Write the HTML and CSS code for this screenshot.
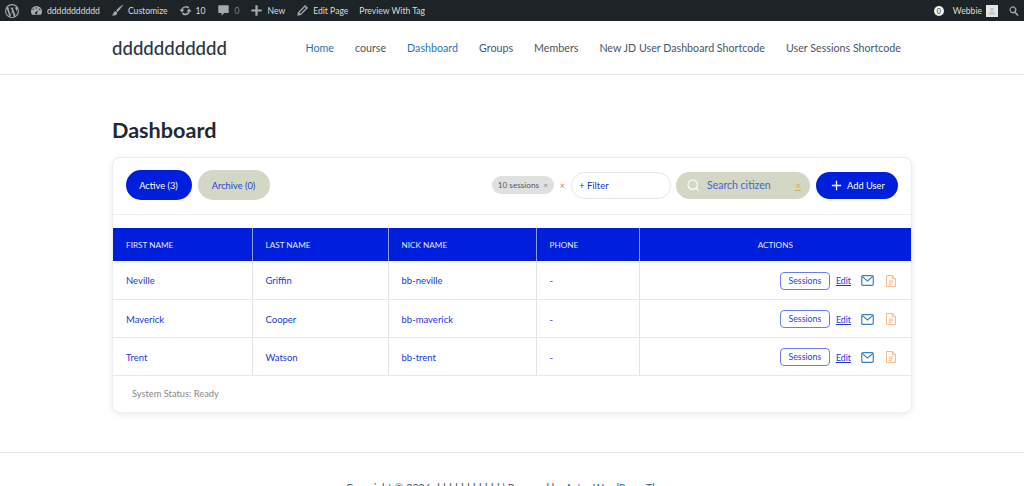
FILE: index.html
```html
<!DOCTYPE html>
<html lang="en">
<head>
    <meta charset="UTF-8">
    <meta name="viewport" content="width=device-width, initial-scale=1.0">
    <title>Dashboard</title>
    <link rel="stylesheet" href="styles.css">
</head>
<body>
    <div class="adminbar">
        <div class="adminbar-group">
            <span class="ab-item"><svg class="ab-icon" width="14" height="14" viewBox="0 0 20 20"><path fill-rule="evenodd" d="M10 0a10 10 0 1 0 0 20 10 10 0 0 0 0-20zM1.600 10c0-1.200.3-2.400.7-3.400l4 11A8.400 8.400 0 0 1 1.600 10zm8.400 8.400c-.8 0-1.600-.1-2.400-.3l2.500-7.300 2.600 7.100v.2c-.8.2-1.700.3-2.700.3zm1.200-12.300c.5 0 1-.1 1-.1.4 0 .4-.7 0-.7 0 0-1.400.1-2.300.1-.8 0-2.200-.1-2.200-.1-.5 0-.5.7 0 .7 0 0 .4.1.9.1l1.300 3.600-1.900 5.500-3-9.100c.5 0 1-.1 1-.1.400 0 .400-.7 0-.7 0 0-1.400.1-2.300.1h-.5A8.400 8.400 0 0 1 16.200 4.300h-.1c-.8 0-1.400.7-1.400 1.500 0 .7.400 1.300.9 2 .3.600.700 1.300.700 2.400 0 .7-.3 1.600-.7 2.700l-.8 2.900zm3.100 11.200l2.600-7.400c.5-1.200.6-2.200.6-3 0-.3 0-.6-.1-.9A8.400 8.400 0 0 1 14.300 17.300z"/></svg></span>
            <span class="ab-item"><svg class="ab-icon" width="13" height="13" viewBox="0 0 20 20"><path fill-rule="evenodd" d="M10 3a8.500 8.500 0 0 0-8.500 8.500c0 1.900.6 3.600 1.700 5h13.600a8.500 8.500 0 0 0 1.700-5A8.500 8.500 0 0 0 10 3zm0 2a1.200 1.200 0 1 1 0 2.400A1.200 1.200 0 0 1 10 5zM5 7a1.200 1.200 0 1 1 0 2.400A1.200 1.200 0 0 1 5 7zm10 0a1.200 1.200 0 1 1 0 2.400A1.200 1.200 0 0 1 15 7zm-1.500 1.500l-2.600 4.200a1.800 1.800 0 1 1-1.400-.6z"/></svg>ddddddddddd</span>
            <span class="ab-item"><svg class="ab-icon" width="13" height="13" viewBox="0 0 20 20"><path d="M18.300 1.200c-2.500 1.400-8.300 6-10.500 8.800l2.400 2.200c2.700-2.500 7.200-8.500 8.700-10.600zM7 11c-2.200.3-3 1.800-3.300 3.300-.3 1.400-1.200 2.300-2.700 2.900 2.600 1 6.200.6 8-1.600.7-.9.700-2 .3-2.400z"/></svg>Customize</span>
            <span class="ab-item"><svg class="ab-icon" width="13" height="13" viewBox="0 0 20 20"><path d="M10.200 3.300c-3.300 0-6 2.200-6.800 5.200H.6l3.900 4.400 3.900-4.400H5.700c.7-1.800 2.500-3 4.500-3 1.400 0 2.600.6 3.500 1.500l2-1.900a7.200 7.200 0 0 0-5.500-1.800zM15.500 7.100l-3.900 4.400h2.700c-.7 1.800-2.500 3-4.500 3-1.400 0-2.600-.6-3.500-1.500l-2 1.900a7 7 0 0 0 12.300-3.400h2.800z"/></svg>10</span>
            <span class="ab-item ab-muted"><svg class="ab-icon ab-icon-comment" width="13" height="13" viewBox="0 0 20 20"><path d="M3 2h14a1 1 0 0 1 1 1v10a1 1 0 0 1-1 1h-6l-4 4v-4H3a1 1 0 0 1-1-1V3a1 1 0 0 1 1-1z"/></svg>0</span>
            <span class="ab-item"><svg class="ab-icon" width="13" height="13" viewBox="0 0 20 20"><path d="M8.300 2h3.400v6.300H18v3.400h-6.300V18H8.300v-6.300H2V8.300h6.300z"/></svg>New</span>
            <span class="ab-item"><svg class="ab-icon" width="13" height="13" viewBox="0 0 20 20"><path fill-rule="evenodd" d="M14 1.500l4.500 4.500L7.500 17 2 18l1-5.500zM13.800 4.500L5 13.300l1.700 1.700 8.800-8.800z"/></svg>Edit Page</span>
            <span class="ab-item">Preview With Tag</span>
        </div>
        <div class="adminbar-group">
            <span class="ab-badge">0</span>
            <span class="ab-user">Webbie</span>
            <span class="ab-avatar"><svg width="12" height="12" viewBox="0 0 15 15"><rect width="15" height="15" fill="#e6e6e6"/><circle cx="7.500" cy="5.500" r="2.200" fill="#c4c4c4"/><path d="M3 12c.4-2.600 2.200-3.600 4.500-3.600S11.600 9.400 12 12z" fill="#c4c4c4"/></svg></span>
            <svg class="ab-search" width="12" height="12" viewBox="0 0 20 20"><path fill-rule="evenodd" d="M8 2a6 6 0 0 1 4.900 9.500l5 5-2 2-5-5A6 6 0 1 1 8 2zm0 2.300a3.700 3.700 0 1 0 0 7.400 3.700 3.700 0 0 0 0-7.400z"/></svg>
        </div>
    </div>

    <header class="site-header">
        <div class="site-title">ddddddddddd</div>
        <nav class="site-nav">
            <a class="current" href="#">Home</a>
            <a href="#">course</a>
            <a class="current" href="#">Dashboard</a>
            <a href="#">Groups</a>
            <a href="#">Members</a>
            <a href="#">New JD User Dashboard Shortcode</a>
            <a href="#">User Sessions Shortcode</a>
        </nav>
    </header>

    <main class="content">
        <h1>Dashboard</h1>
        <div class="card">
            <div class="toolbar">
                <div class="tabs">
                    <button class="tab tab-active">Active (3)</button>
                    <button class="tab tab-archive">Archive (0)</button>
                </div>
                <div class="tools">
                    <span class="chip">10 sessions <i>×</i></span>
                    <span class="clear-x">×</span>
                    <div class="filter">+ Filter</div>
                    <div class="search">
                        <svg width="13" height="13" viewBox="0 0 16 16" fill="none" stroke="#fff" stroke-width="1.400"><circle cx="7" cy="7" r="5.800"/><path d="M11 11l3.500 3.500"/></svg>
                        <span class="search-text">Search citizen</span>
                        <span class="search-x">×</span>
                    </div>
                    <button class="add-user"><svg width="11" height="11" viewBox="0 0 13 13" stroke="#fff" stroke-width="1.600"><path d="M6.500 1v11M1 6.500h11"/></svg>Add User</button>
                </div>
            </div>
            <table class="users">
                <thead>
                    <tr>
                        <th class="col-first">First Name</th>
                        <th class="col-last">Last Name</th>
                        <th class="col-nick">Nick Name</th>
                        <th class="col-phone">Phone</th>
                        <th class="col-actions">Actions</th>
                    </tr>
                </thead>
                <tbody>
                    <tr>
                        <td>Neville</td><td>Griffin</td><td>bb-neville</td><td>-</td>
                        <td>
                            <div class="actions">
                                <a class="btn-sessions" href="#">Sessions</a>
                                <a class="edit" href="#">Edit</a>
                                <svg class="mail" width="13" height="11" viewBox="0 0 14 12" fill="none" stroke="#3d7fb8" stroke-width="1.300"><rect x=".7" y=".7" width="12.600" height="10.600" rx="1.500"/><path d="M1 1.500l6 5 6-5"/></svg>
                                <svg class="doc" width="10" height="12" viewBox="0 0 11 13" fill="none" stroke="#f4b27c"><path d="M.5.500h6.500l3.500 3.500v8.500H.5zM7 .5V4h3.500M3 6.500h5M3 8.500h5M3 10.500h3"/></svg>
                            </div>
                        </td>
                    </tr>
                    <tr>
                        <td>Maverick</td><td>Cooper</td><td>bb-maverick</td><td>-</td>
                        <td>
                            <div class="actions">
                                <a class="btn-sessions" href="#">Sessions</a>
                                <a class="edit" href="#">Edit</a>
                                <svg class="mail" width="13" height="11" viewBox="0 0 14 12" fill="none" stroke="#3d7fb8" stroke-width="1.300"><rect x=".7" y=".7" width="12.600" height="10.600" rx="1.500"/><path d="M1 1.500l6 5 6-5"/></svg>
                                <svg class="doc" width="10" height="12" viewBox="0 0 11 13" fill="none" stroke="#f4b27c"><path d="M.5.500h6.500l3.500 3.500v8.500H.5zM7 .5V4h3.500M3 6.500h5M3 8.500h5M3 10.500h3"/></svg>
                            </div>
                        </td>
                    </tr>
                    <tr>
                        <td>Trent</td><td>Watson</td><td>bb-trent</td><td>-</td>
                        <td>
                            <div class="actions">
                                <a class="btn-sessions" href="#">Sessions</a>
                                <a class="edit" href="#">Edit</a>
                                <svg class="mail" width="13" height="11" viewBox="0 0 14 12" fill="none" stroke="#3d7fb8" stroke-width="1.300"><rect x=".7" y=".7" width="12.600" height="10.600" rx="1.500"/><path d="M1 1.500l6 5 6-5"/></svg>
                                <svg class="doc" width="10" height="12" viewBox="0 0 11 13" fill="none" stroke="#f4b27c"><path d="M.5.500h6.500l3.500 3.500v8.500H.5zM7 .5V4h3.500M3 6.500h5M3 8.500h5M3 10.500h3"/></svg>
                            </div>
                        </td>
                    </tr>
                </tbody>
            </table>
            <div class="status">System Status: Ready</div>
        </div>
    </main>

    <footer class="site-footer">
        Copyright © 2026 ddddddddddd | Powered by <a href="#">Astra WordPress Theme</a>
    </footer>
</body>
</html>
```

FILE: styles.css
```css
html, body {
    height: 486px;
    overflow: hidden;
}
body {
    font-family: Lato, "Noto Sans", sans-serif;
    margin: 0;
    padding: 0;
    background-color: #fff;
    color: #3a3a3a;
}
a {
    text-decoration: none;
}

/* admin bar */
.adminbar {
    display: flex;
    justify-content: space-between;
    align-items: center;
    height: 21px;
    padding: 0 4px 0 5px;
    background-color: #1d2327;
    color: #dcdcde;
    font-size: 8.600px;
}
.adminbar-group {
    display: flex;
    align-items: center;
}
.ab-item {
    display: flex;
    align-items: center;
    margin-right: 11px;
}
.ab-item:first-child .ab-icon {
    margin-right: 0;
}
.ab-muted {
    color: #7f8488;
}
.ab-icon {
    fill: #a7aaad;
    margin-right: 4px;
}
.ab-icon-comment {
    margin-right: 5px;
}
.ab-badge {
    width: 10px;
    height: 10px;
    border-radius: 50%;
    background-color: #f0f0f1;
    color: #1d2327;
    font-size: 7px;
    line-height: 10px;
    text-align: center;
    margin-right: 9px;
}
.ab-user {
    margin-right: 4px;
}
.ab-avatar {
    display: flex;
    margin-right: 10px;
}
.ab-search {
    fill: #a7aaad;
}

/* site header */
.site-header {
    display: flex;
    justify-content: space-between;
    align-items: center;
    height: 53px;
    padding: 0 123px 0 112px;
    border-bottom: 1px solid #e4e6e9;
}
.site-title {
    font-size: 18.600px;
    font-weight: 500;
    color: #2c3646;
}
.site-nav {
    display: flex;
    gap: 21px;
    font-size: 10.700px;
}
.site-nav a {
    color: #4b5563;
}
.site-nav a.current {
    color: #1f73be;
}

/* main */
.content {
    padding: 42px 112px 39px;
}
h1 {
    margin: 0 0 14px;
    font-size: 21.600px;
    line-height: 26px;
    font-weight: 700;
    color: #1f2937;
}
.card {
    border: 1px solid #eceef1;
    border-radius: 8px;
    box-shadow: 0 2px 6px rgba(0, 0, 0, 0.08);
    background-color: #fff;
    overflow: hidden;
}
.toolbar {
    display: flex;
    justify-content: space-between;
    align-items: center;
    height: 54px;
    padding: 0 13px 2px 12.500px;
    border-bottom: 1px solid #eceef1;
    margin-bottom: 13px;
}
.tabs, .tools {
    display: flex;
    align-items: center;
}
.tabs {
    gap: 6px;
}
.tab {
    width: 66px;
    height: 30px;
    padding: 0;
    border: 0;
    border-radius: 15px;
    font-family: inherit;
    font-size: 9.300px;
}
.tab-active {
    background-color: #001fdc;
    color: #fff;
}
.tab-archive {
    width: 72px;
    background-color: #d2d8c5;
    color: #2a3fd0;
}
.chip {
    width: 62px;
    box-sizing: border-box;
    height: 18px;
    line-height: 18px;
    padding-left: 6px;
    border-radius: 9px;
    background-color: #e0e0e0;
    color: #555;
    font-size: 8.200px;
}
.chip i {
    font-style: normal;
    color: #888;
    margin-left: 2px;
}
.clear-x {
    color: #e57373;
    font-size: 9px;
    margin: 0 6px;
}
.filter {
    width: 100px;
    box-sizing: border-box;
    height: 27px;
    line-height: 26px;
    padding-left: 7px;
    border: 1px solid #e4e4e4;
    border-radius: 14px;
    color: #1c36d8;
    font-size: 9.500px;
    margin-right: 5px;
}
.search {
    display: flex;
    align-items: center;
    width: 134px;
    height: 27px;
    box-sizing: border-box;
    padding: 0 9px 0 11px;
    border-radius: 14px;
    background-color: #d2d8c5;
    margin-right: 6px;
}
.search-text {
    flex: 1;
    margin-left: 7px;
    color: #4a5fc9;
    font-size: 10.500px;
}
.search-x {
    color: #d9a74a;
    font-size: 10px;
    text-decoration: underline;
}
.add-user {
    display: flex;
    align-items: center;
    gap: 5px;
    width: 82px;
    height: 27px;
    padding: 0 0 0 15px;
    border: 0;
    border-radius: 14px;
    background-color: #001fdc;
    color: #fff;
    font-family: inherit;
    font-size: 9.300px;
}

/* table */
.users {
    width: 100%;
    border-collapse: collapse;
    table-layout: fixed;
    font-size: 9.500px;
}
.users th {
    box-sizing: border-box;
    height: 33px;
    padding: 1px 13px 0;
    background-color: #001fdc;
    color: #e4e8ff;
    font-weight: 400;
    font-size: 8.200px;
    text-transform: uppercase;
    text-align: left;
    border-right: 1px solid #8d9bf0;
}
.users th:last-child {
    border-right: 0;
}
.users th.col-actions {
    text-align: center;
}
.col-first {
    width: 139px;
}
.col-last {
    width: 136px;
}
.col-nick {
    width: 148px;
}
.col-phone {
    width: 103px;
}
.users td {
    box-sizing: border-box;
    height: 38px;
    padding: 2px 13px 0;
    color: #1c36d8;
    border-right: 1px solid #e2e4e8;
    border-bottom: 1px solid #e8e9ec;
}
.users td:last-child {
    border-right: 0;
    padding-right: 15px;
}
.actions {
    display: flex;
    justify-content: flex-end;
    align-items: center;
}
.btn-sessions {
    width: 50px;
    box-sizing: border-box;
    height: 18px;
    line-height: 16px;
    text-align: center;
    border: 1px solid #6b7cf0;
    border-radius: 4px;
    color: #2a3fd0;
    font-size: 8.800px;
}
.edit {
    margin-left: 6px;
    color: #1c36d8;
    font-size: 8.800px;
    text-decoration: underline;
}
.mail {
    margin-left: 10px;
}
.doc {
    margin-left: 12px;
}
.status {
    height: 36px;
    line-height: 36px;
    padding-left: 19px;
    color: #888;
    font-size: 9.300px;
}

/* footer */
.site-footer {
    border-top: 1px solid #e4e6e9;
    padding-top: 28px;
    text-align: center;
    font-size: 10.700px;
    color: #4b5563;
}
.site-footer a {
    color: #1f73be;
}
```
